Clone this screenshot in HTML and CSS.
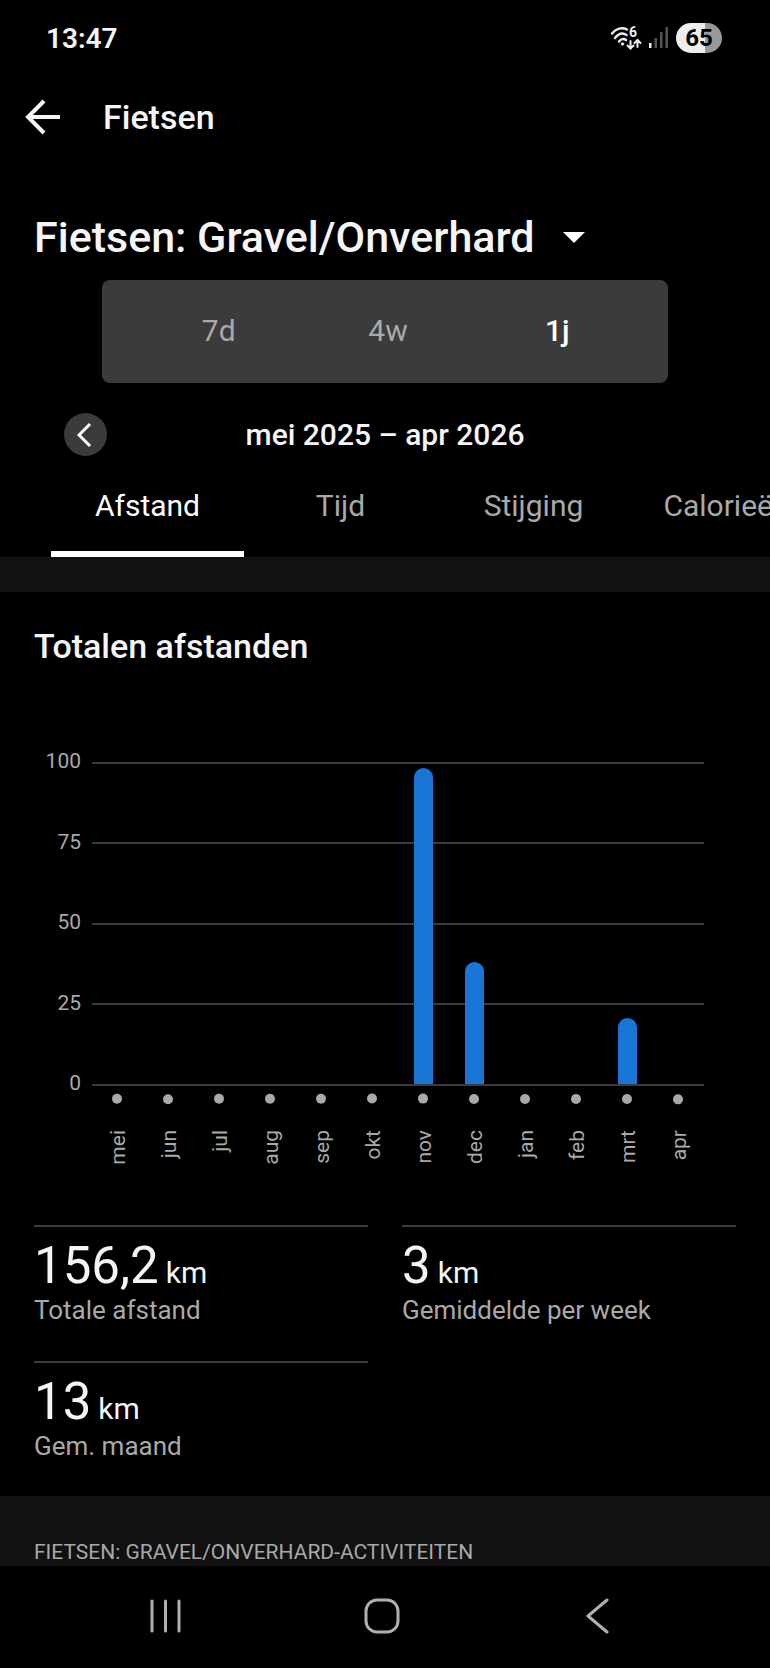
FILE: index.html
```html
<!doctype html>
<html lang="nl">
	<head>
		<meta charset="utf-8">
		<meta name="viewport" content="width=device-width, initial-scale=1.0">
		<title>Fietsen</title>
		<link rel="stylesheet" href="styles.css">
	</head>
	<body>
		<div class="statusbar">
			<time class="clock">13:47</time>
			<div class="status-icons">
				<svg width="32" height="28" viewBox="0 0 32 28" fill="none" stroke="#eee" stroke-width="2.4" stroke-linecap="round" aria-hidden="true">
					<path d="M2 9.500C6 4.500 12 3 17 5.500M5 14C9 9 13 8.500 16.500 11M9 17.500C11 14.500 14 14.500 16 16"/>
					<circle cx="12.500" cy="20" r="1.200" fill="#eee" stroke-width="1"/>
					<path d="M20.500 17V24M17.500 21.500L20.500 24.500L23.500 21.500M27.500 23V16.500M24.500 19L27.500 16L30.500 19" stroke-width="2"/>
					<text class="wifi-gen" x="19" y="13">6</text>
				</svg>
				<svg width="20" height="28" viewBox="0 0 20 28" aria-hidden="true">
					<path d="M0 19h2.500v5h-2.500z" fill="#eee"/>
					<path d="M5.500 14h2.500v10h-2.500zM11 8h2.500v16h-2.500zM16.500 3h2.500v21h-2.500z" fill="#555"/>
				</svg>
				<span class="battery">65</span>
			</div>
		</div>

		<header class="topbar">
			<button class="icon-btn" type="button" aria-label="Terug">
				<svg width="36" height="36" viewBox="0 0 36 36" fill="none" stroke="#f5f5f5" stroke-width="4">
					<path d="M35 18H4M19 2L3 18L19 34"/>
				</svg>
			</button>
			<h1>Fietsen</h1>
		</header>

		<main>
			<div class="sport">
				<select class="sport-select" aria-label="Activiteitstype">
					<option>Fietsen: Gravel/Onverhard</option>
				</select>
				<svg width="22" height="11" viewBox="0 0 22 11" aria-hidden="true"><path d="M0 0h22l-11 11z" fill="#fff"/></svg>
			</div>

			<div class="periods">
				<button type="button">7d</button>
				<button type="button">4w</button>
				<button class="active" type="button">1j</button>
			</div>

			<div class="range">
				<button class="prev" type="button" aria-label="Vorige periode">
					<svg width="18" height="26" viewBox="0 0 18 26" fill="none" stroke="#fff" stroke-width="3">
						<path d="M13 2L2 13L13 24"/>
					</svg>
				</button>
				<h2>mei 2025 – apr 2026</h2>
			</div>

			<nav class="tabs">
				<button class="active" type="button">Afstand</button>
				<button type="button">Tijd</button>
				<button type="button">Stijging</button>
				<button type="button">Calorieën</button>
			</nav>

			<section class="totals">
				<h2>Totalen afstanden</h2>

				<div class="chart">
					<div class="y-axis">
						<span>100</span>
						<span>75</span>
						<span>50</span>
						<span>25</span>
						<span>0</span>
					</div>
					<div class="plot">
						<div class="bars">
							<div class="col"></div>
							<div class="col"></div>
							<div class="col"></div>
							<div class="col"></div>
							<div class="col"></div>
							<div class="col"></div>
							<div class="col"><div class="bar" style="height: 98%"></div></div>
							<div class="col"><div class="bar" style="height: 38%"></div></div>
							<div class="col"></div>
							<div class="col"></div>
							<div class="col"><div class="bar" style="height: 20.5%"></div></div>
							<div class="col"></div>
						</div>
						<div class="months">
							<span>mei</span>
							<span>jun</span>
							<span>jul</span>
							<span>aug</span>
							<span>sep</span>
							<span>okt</span>
							<span>nov</span>
							<span>dec</span>
							<span>jan</span>
							<span>feb</span>
							<span>mrt</span>
							<span>apr</span>
						</div>
					</div>
				</div>

				<div class="stats">
					<div class="stat">
						<p class="value">156,2 <small>km</small></p>
						<p class="label">Totale afstand</p>
					</div>
					<div class="stat">
						<p class="value">3 <small>km</small></p>
						<p class="label">Gemiddelde per week</p>
					</div>
					<div class="stat">
						<p class="value">13 <small>km</small></p>
						<p class="label">Gem. maand</p>
					</div>
				</div>
			</section>

			<h3 class="list-title">Fietsen: Gravel/Onverhard-activiteiten</h3>
		</main>

		<!-- Android navigation -->
		<footer class="navbar">
			<button type="button" aria-label="Recente apps">
				<svg width="36" height="36" viewBox="0 0 36 36" stroke="#b0b0b0" stroke-width="3" stroke-linecap="round">
					<path d="M4 3V33M17.500 3V33M31 3V33"/>
				</svg>
			</button>
			<button type="button" aria-label="Startscherm">
				<svg width="36" height="36" viewBox="0 0 36 36" fill="none" stroke="#b0b0b0" stroke-width="3">
					<rect x="2" y="2" width="32" height="32" rx="11"/>
				</svg>
			</button>
			<button type="button" aria-label="Terug">
				<svg width="36" height="36" viewBox="0 0 36 36" fill="none" stroke="#b0b0b0" stroke-width="3" stroke-linecap="round" stroke-linejoin="round">
					<path d="M27 2L8 18L27 34"/>
				</svg>
			</button>
		</footer>
	</body>
</html>
```
FILE: styles.css
```css
* { box-sizing: border-box; }

:root {
	--bg: #000;
	--band: #111;
	--panel: #3b3b3b;
	--line: #3b3b3b;
	--text: #f5f5f5;
	--muted: #a9a9a9;
	--bar: #1976d6;
}

body {
	display: flex;
	flex-direction: column;
	min-height: 100vh;
	margin: 0;
	font-family: Roboto, sans-serif;
	color: var(--text);
	background: var(--bg);
}

h1, h2, h3, p {
	margin: 0;
	font-weight: 500;
}

button,
select {
	padding: 0;
	border: 0;
	font: inherit;
	color: inherit;
	background: none;
	cursor: pointer;
}

svg { display: block; }

/* Status bar */
.statusbar {
	display: flex;
	justify-content: space-between;
	align-items: center;
	height: 76px;
	padding: 0 48px 0 46px;
}

.clock {
	font-size: 28px;
	font-weight: 600;
}

.status-icons {
	display: flex;
	align-items: center;
	gap: 7px;
}

.wifi-gen {
	font-size: 14px;
	font-weight: 700;
	fill: #eee;
	stroke: none;
}

.battery {
	width: 46px;
	border-radius: 15px;
	font-size: 24px;
	font-weight: 700;
	line-height: 30px;
	text-align: center;
	color: #000;
	background: linear-gradient(to right, #eee 64%, #999 64%);
}

/* Top bar */
.topbar {
	display: flex;
	align-items: center;
	gap: 42px;
	height: 82px;
	padding: 0 25px;
}

.topbar h1 { font-size: 34px; }

/* Filters */
.sport {
	display: flex;
	align-items: center;
	gap: 28px;
	padding: 51px 34px 15px;
}

.sport-select {
	appearance: none;
	font-size: 43px;
	font-weight: 500;
	line-height: 56px;
}

.periods {
	display: flex;
	height: 103px;
	margin: 0 102px;
	padding: 0 26px 2px 32px;
	border-radius: 8px;
	font-size: 30px;
	color: var(--muted);
	background: var(--panel);
}

.periods button { flex: 1; }

.periods .active {
	font-weight: 500;
	color: #fff;
}

.range {
	display: grid;
	grid-template-columns: 43px 1fr 43px;
	align-items: center;
	padding: 30px 64px 0;
	text-align: center;
}

.range h2 { font-size: 30px; }

.prev {
	display: grid;
	place-items: center;
	height: 43px;
	border-radius: 50%;
	background: var(--panel);
}

.tabs {
	display: flex;
	height: 101px;
	padding-left: 51px;
	overflow-x: auto;
	scrollbar-width: none;
	font-size: 30px;
	color: var(--muted);
}

.tabs button {
	flex: 0 0 193px;
	padding-top: 4px;
	border-bottom: 6px solid transparent;
}

.tabs .active {
	color: #fff;
	border-color: #fff;
}

/* Totals */
.totals {
	padding: 34px 34px 33px;
	border-top: 35px solid var(--band);
}

.totals h2 {
	font-size: 34px;
	line-height: 40px;
}

.chart {
	display: flex;
	gap: 11px;
	margin: 96px 32px 0 0;
	font-size: 21px;
	color: var(--muted);
}

.y-axis {
	display: flex;
	flex-direction: column;
	justify-content: space-between;
	width: 47px;
	height: 346px;
	margin-top: -13px;
	line-height: 24px;
	text-align: right;
}

.plot { flex: 1; }

.bars {
	display: flex;
	height: 324px;
	border-bottom: 2px solid var(--line);
	background: repeating-linear-gradient(to bottom, var(--line) 0 2px, transparent 2px 25%) 0 0 / 100% 322px;
}

.col {
	display: flex;
	flex: 1;
	justify-content: center;
	align-items: flex-end;
}

.bar {
	width: 19px;
	border-radius: 10px 10px 0 0;
	background: var(--bar);
}

.months {
	display: flex;
	align-items: flex-start;
	height: 90px;
	padding-top: 8px;
}

.months span {
	display: flex;
	flex: 1;
	align-items: center;
	justify-content: flex-end;
	writing-mode: vertical-rl;
	transform: rotate(180deg);
}

.months span::after {
	content: "";
	width: 10px;
	height: 10px;
	margin-top: 26px;
	border-radius: 50%;
	background: var(--muted);
}

.stats {
	display: grid;
	grid-template-columns: 1fr 1fr;
	gap: 34px;
	margin-top: 49px;
}

.stat {
	height: 102px;
	padding-top: 11px;
	border-top: 2px solid var(--line);
}

.value {
	display: flex;
	align-items: baseline;
	gap: 7px;
	font-size: 51px;
	font-weight: 400;
	line-height: 56px;
}

.value small {
	font-size: 30px;
	line-height: 30px;
}

.label {
	font-size: 26px;
	font-weight: 400;
	line-height: 32px;
	color: var(--muted);
}

.list-title {
	padding: 42px 34px 0;
	font-size: 21px;
	font-weight: 400;
	line-height: 28px;
	text-transform: uppercase;
	color: var(--muted);
	background: var(--band);
}

/* Navigation bar */
.navbar {
	display: flex;
	flex: 1;
	justify-content: space-around;
	align-items: center;
	min-height: 102px;
	padding: 0 64px 2px 58px;
}
```
